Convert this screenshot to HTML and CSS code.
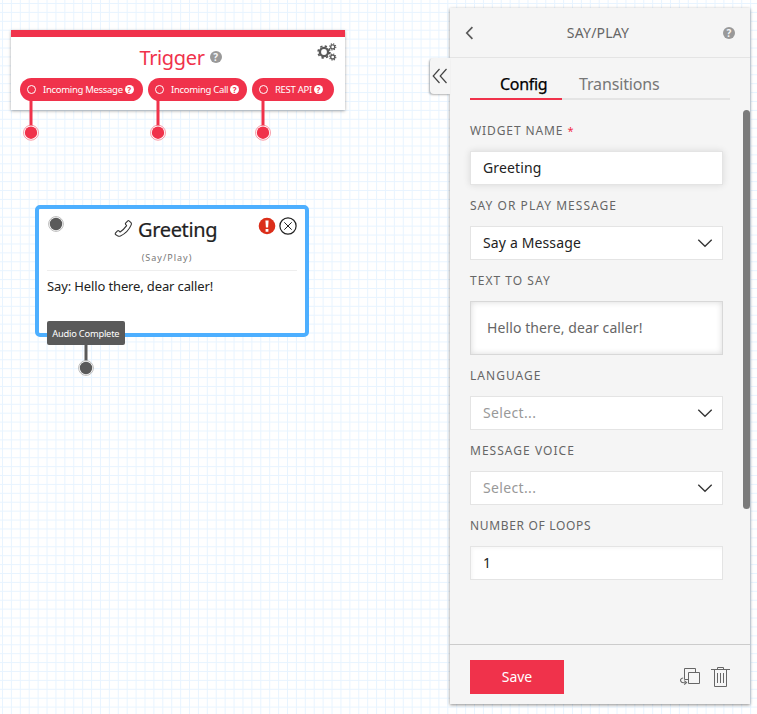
FILE: index.html
```
<!DOCTYPE html>
<html lang="en">
<head>
<meta charset="utf-8">
<title>Studio Flow</title>
<link rel="stylesheet" href="styles.css">
</head>
<body>
<main class="canvas">
  <section class="trigger">
    <div class="trigger-head">
      <h2>Trigger</h2><span class="help help-grey">?</span>
      <svg class="gears" viewBox="0 0 20 18" width="20" height="18" fill="none" stroke="#5a5a5a">
        <circle cx="7" cy="9" r="4.1" stroke-width="2.4"/>
        <circle cx="7" cy="9" r="5.9" stroke-width="1.7" stroke-dasharray="2.32 2.32"/>
        <circle cx="15.7" cy="3.9" r="2" stroke-width="1.3"/>
        <circle cx="15.7" cy="3.9" r="3.1" stroke-width="1.1" stroke-dasharray="1.22 1.22"/>
        <circle cx="15.7" cy="14" r="2" stroke-width="1.3"/>
        <circle cx="15.7" cy="14" r="3.1" stroke-width="1.1" stroke-dasharray="1.22 1.22"/>
      </svg>
    </div>
    <div class="pills">
      <div class="pill pill-message"><i class="ring"></i><span>Incoming Message</span><b class="help help-white">?</b><svg class="wire" width="16" height="41" viewBox="0 0 16 41"><use href="#redwire"/></svg></div>
      <div class="pill pill-call"><i class="ring"></i><span>Incoming Call</span><b class="help help-white">?</b><svg class="wire" width="16" height="41" viewBox="0 0 16 41"><use href="#redwire"/></svg></div>
      <div class="pill pill-api"><i class="ring"></i><span>REST API</span><b class="help help-white">?</b><svg class="wire" width="16" height="41" viewBox="0 0 16 41"><use href="#redwire"/></svg></div>
    </div>
  </section>

  <section class="widget">
    <svg class="input-port" width="16" height="16" viewBox="0 0 16 16"><circle cx="8" cy="8" r="7.4" fill="#fff" stroke="#aaa" stroke-width=".8"/><circle cx="8" cy="8" r="6.2" fill="#5a5a5a"/></svg>
    <div class="widget-title">
      <svg width="19" height="19" viewBox="0 0 19 19" fill="none" stroke="#333" stroke-width="1.1" stroke-linejoin="round"><path d="M1.4 14.2 3.5 11.9Q4.2 11.3 4.9 11.9L6.1 13Q9.9 10.4 12.6 6.6L11.6 5.3Q11.1 4.7 11.6 4.1L13.8 1.8Q14.4 1.3 15 1.8L17 3.7Q17.7 4.5 17.3 5.6Q14.2 13.2 6.4 17Q5 17.5 4 17.1L1.5 15.5Q.9 14.9 1.4 14.2Z"/></svg>
      <h2>Greeting</h2>
    </div>
    <div class="widget-actions">
      <svg width="18" height="18" viewBox="0 0 18 18"><circle cx="9" cy="9" r="8.3" fill="#db2e1a"/><path d="M7.4 3.4h3.2l-.5 7.2H7.9zM7.6 12h2.8v2.7H7.6z" fill="#fff"/></svg>
      <svg width="18" height="18" viewBox="0 0 18 18" fill="none" stroke="#222"><circle cx="9" cy="9" r="8.1" stroke-width="1.2"/><path d="m5.3 5.3 7.4 7.4m0-7.4-7.4 7.4"/></svg>
    </div>
    <p class="kind">(Say/Play)</p>
    <p class="summary">Say: Hello there, dear caller!</p>
    <div class="output"><span>Audio Complete</span>
      <svg class="output-wire" width="16" height="31" viewBox="0 0 16 31"><path d="M8 0v23" stroke="#5a5a5a" stroke-width="3"/><circle cx="8" cy="23" r="7.4" fill="#fff" stroke="#aaa" stroke-width=".8"/><circle cx="8" cy="23" r="6.2" fill="#5a5a5a"/></svg>
    </div>
  </section>

  <aside class="panel">
    <button class="collapse" aria-label="Expand"><svg width="16" height="16" viewBox="0 0 16 16" fill="none" stroke="#444" stroke-width="1.2"><path d="M7.5 1 1.2 8l6.3 7M14.5 1 8.2 8l6.3 7"/></svg></button>
    <header class="panel-head">
      <svg width="9" height="14" viewBox="0 0 9 14" fill="none" stroke="#5a5a5a" stroke-width="1.7"><path d="M7.4 1.2 1.8 7l5.6 5.8"/></svg>
      <h1>SAY/PLAY</h1>
      <span class="help help-grey help-panel">?</span>
    </header>
    <nav class="tabs"><a class="active"><span>Config</span></a><a><span>Transitions</span></a></nav>
    <form class="fields">
      <label class="l-name">WIDGET NAME <em>*</em></label>
      <div class="field raised">Greeting</div>
      <label class="l-mode">SAY OR PLAY MESSAGE</label>
      <div class="field select"><span class="f-mode">Say a Message</span><svg width="16" height="10" viewBox="0 0 16 10"><use href="#chevron"/></svg></div>
      <label class="l-text">TEXT TO SAY</label>
      <div class="field area"><span>Hello there, dear caller!</span></div>
      <label class="l-lang">LANGUAGE</label>
      <div class="field select empty"><span>Select...</span><svg width="16" height="10" viewBox="0 0 16 10"><use href="#chevron"/></svg></div>
      <label class="l-voice">MESSAGE VOICE</label>
      <div class="field select empty"><span>Select...</span><svg width="16" height="10" viewBox="0 0 16 10"><use href="#chevron"/></svg></div>
      <label class="l-loops">NUMBER OF LOOPS</label>
      <div class="field number">1</div>
    </form>
    <div class="scrollbar"></div>
    <footer class="panel-foot">
      <button class="save">Save</button>
      <svg class="copy" width="21" height="19" viewBox="0 0 21 19" fill="none" stroke="#666"><path d="M4.5 12.5v-11h11v4M4.5 12.5h4"/><path d="M8.5 5.5h11v11h-11z"/><path d="M3.2 11C.8 11.3 0 13 1 14.5Q1.7 16 5.5 15.6M4.2 13.6l2.4 2-2.4 2.1" stroke-width="1.1"/></svg>
      <svg class="trash" width="19" height="21" viewBox="0 0 19 21" fill="none" stroke="#666"><path d="M0 3.5h19M6.5 3V1.5h6V3M3.5 4v16.5h12V4M6.5 7v10M9.5 7v10M12.5 7v10"/></svg>
    </footer>
  </aside>
</main>
<svg class="defs" width="0" height="0"><defs>
  <g id="redwire"><path d="M8 0v32" stroke="#f0324b" stroke-width="3"/><circle cx="8" cy="32.7" r="7.5" fill="#fff" stroke="#f0324b" stroke-opacity=".7" stroke-width=".7"/><circle cx="8" cy="32.7" r="6.2" fill="#f0324b"/></g>
  <path id="chevron" d="M1.3 1.7 8 8.3l6.7-6.6" fill="none" stroke="#333" stroke-width="1.3"/>
</defs></svg>
</body>
</html>
```
FILE: styles.css
```
* { box-sizing: border-box; }
body { margin: 0; font-family: "Noto Sans", sans-serif; color: #222; overflow: hidden; }
h1, h2, p { margin: 0; font-weight: 400; white-space: nowrap; }
button { font: inherit; border: 0; padding: 0; }
svg { display: block; flex: none; }
.defs { position: absolute; }
.canvas {
  position: relative; width: 757px; height: 714px; overflow: hidden;
  background-color: #fff;
  background-image: linear-gradient(90deg, #e8f4ff 1px, transparent 1px), linear-gradient(#e8f4ff 1px, transparent 1px);
  background-size: 8.92px 8.92px; background-position: 2px 3px;
}
.help { display: inline-flex; align-items: center; justify-content: center; flex: none; border-radius: 50%; font-weight: 700; letter-spacing: 0; }
.help-grey { width: 12px; height: 12px; font-size: 10px; line-height: 12px; background: #999; color: #f5f5f5; }
.help-white { width: 9px; height: 9px; font-size: 8px; line-height: 9px; background: #fff; color: #f0324b; }

.trigger { position: absolute; left: 11px; top: 30px; width: 334px; height: 80px; background: #fff; border-top: 7px solid #f0324b; box-shadow: 0 1px 3px rgba(0,0,0,.35); }
.trigger-head { height: 41px; display: flex; align-items: center; justify-content: center; gap: 5px; position: relative; padding-left: 5px; }
.trigger-head h2 { color: #f0324b; font-size: 20px; line-height: 28px; letter-spacing: -.35px; padding-top: 1px; }
.trigger-head .help { margin-bottom: 1px; }
.gears { position: absolute; right: 8px; top: 6px; }
.pills { display: flex; gap: 5px; padding-left: 9px; }
.pill { position: relative; height: 23px; border-radius: 12px; background: #f0324b; color: #fff; display: flex; align-items: center; padding-left: 7px; font-size: 9.5px; letter-spacing: -.3px; }
.pill span { margin-left: 7px; white-space: nowrap; }
.pill .help { margin: 0 0 1px 2px; }
.pill-message { width: 123px; }
.pill-call { width: 99px; }
.pill-api { width: 82px; }
.ring { width: 9px; height: 9px; border: 1px solid #fff; border-radius: 50%; flex: none; }
.wire { position: absolute; left: 3px; top: 22px; }
.pill-call .wire { left: 2px; }

.widget { position: absolute; left: 34.5px; top: 205px; width: 274.5px; height: 132px; padding: 0 8px 0 8.5px; border: 4px solid #4dafff; border-radius: 5px; background: #fff; }
.input-port { position: absolute; left: 9.5px; top: 7px; }
.widget-title { display: flex; align-items: center; gap: 5px; padding: 5px 0 0 67px; height: 36px; }
.widget-title h2 { font-size: 20px; line-height: 28px; letter-spacing: -.35px; -webkit-text-stroke: .2px #222; }
.widget-title svg { margin-bottom: 3px; }
.widget-actions { position: absolute; right: 8px; top: 8px; display: flex; gap: 3px; }
.kind { height: 26px; text-align: center; font-size: 9px; line-height: 26px; letter-spacing: 1px; color: #777; border-bottom: 1px solid #eee; padding-right: 10px; }
.summary { font-size: 13px; line-height: 31px; letter-spacing: -.13px; }
.output { position: absolute; left: 8.5px; top: 112px; width: 77.5px; height: 24px; border-radius: 2px; background: #5a5a5a; color: #fff; font-size: 9.3px; letter-spacing: -.2px; line-height: 25px; text-align: center; white-space: nowrap; }
.output-wire { position: absolute; left: 31px; top: 24px; }

.panel { position: absolute; left: 450px; top: 8px; width: 300px; height: 696px; background: #f5f5f5; box-shadow: 0 1px 3px rgba(0,0,0,.45); display: flex; flex-direction: column; }
.collapse { position: absolute; left: -20px; top: 50px; width: 20px; height: 36px; border-radius: 4px 0 0 4px; background: #f5f5f5; box-shadow: -1px 1px 2px rgba(0,0,0,.3); padding-left: 2px; }
.panel-head { height: 50px; border-bottom: 1px solid #e4e4e4; display: flex; align-items: center; justify-content: space-between; padding: 0 15px; flex: none; }
.panel-head h1 { font-size: 14px; line-height: 20px; letter-spacing: .2px; color: #666; margin-right: 1px; }
.tabs { display: flex; margin: 10px 20px 0; height: 32px; border-bottom: 2px solid #e4e4e4; width: 260px; flex: none; font-size: 16px; line-height: 33px; letter-spacing: -.15px; color: #777; }
.tabs a { height: 32px; padding-left: 17px; white-space: nowrap; }
.tabs .active { width: 92px; border-bottom: 2px solid #f0324b; padding-left: 30px; letter-spacing: -.3px; color: #000; -webkit-text-stroke: .25px #000; }
.fields { padding: 21px 28px 0 20px; width: 301px; flex: 1; }
.fields label { display: block; height: 20px; margin-bottom: 10px; font-size: 12px; line-height: 20px; color: #666; letter-spacing: 1.03px; white-space: nowrap; }
.fields .l-name { letter-spacing: .9px; }
.fields .l-loops { letter-spacing: .67px; }
.fields em { color: #f22f46; font-style: normal; font-size: 11px; }
.field { height: 34px; margin-bottom: 11px; border: 1px solid #e4e4e4; background: #fff; padding: 0 12px; font-size: 14px; line-height: 32px; letter-spacing: .14px; color: #222; white-space: nowrap; }
.raised { box-shadow: 0 0 7px rgba(0,0,0,.12); }
.select { display: flex; align-items: center; justify-content: space-between; padding-right: 9px; }
.empty { color: #999; letter-spacing: .35px; }
.area { height: 54px; padding-left: 16px; line-height: 52px; letter-spacing: .1px; color: #666; border-color: #d8d8d8; box-shadow: inset 0 0 6px rgba(0,0,0,.15); }
.number { box-shadow: inset 2px 2px 3px rgba(0,0,0,.03); }
.scrollbar { position: absolute; right: 0; top: 102px; width: 7px; height: 399px; border-radius: 4px; background: #7b7b7b; }
.panel-foot { height: 60px; border-top: 1px solid #ccc; display: flex; align-items: center; padding: 4px 19px 0 20px; flex: none; }
.save { width: 94px; height: 34px; flex: none; background: #f0324b; color: #fff; font-size: 14px; }
.copy { margin-left: 116px; }
.trash { margin-left: 10px; }
```
